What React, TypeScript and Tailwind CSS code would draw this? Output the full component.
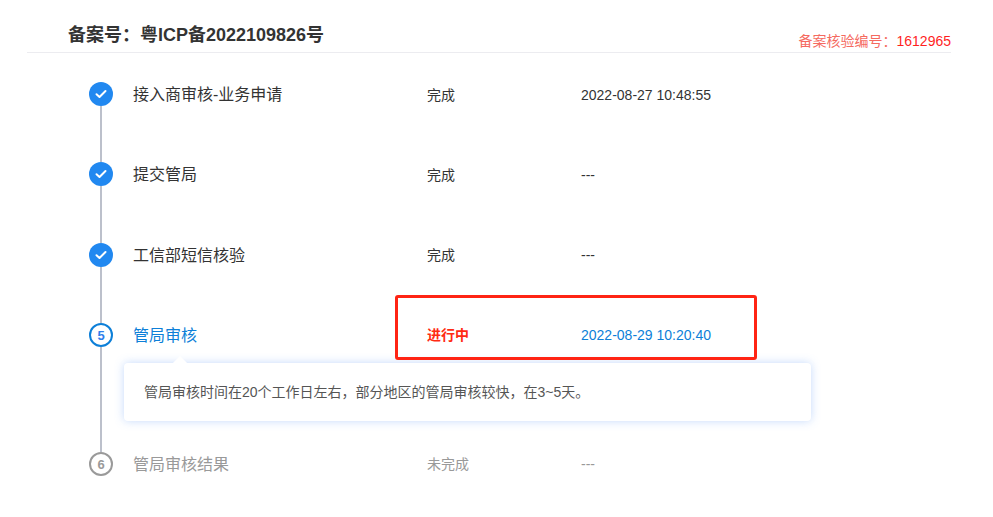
import { ReactNode } from "react";

type Step = {
  name: string;
  status: string;
  time: string;
  state: "done" | "active" | "todo";
  no?: number;
  rowClass: string;
  metaClass?: string;
};

const steps: Step[] = [
  { name: "接入商审核-业务申请", status: "完成", time: "2022-08-27 10:48:55", state: "done", rowClass: "h-[80px]" },
  { name: "提交管局", status: "完成", time: "---", state: "done", rowClass: "h-[81px]" },
  { name: "工信部短信核验", status: "完成", time: "---", state: "done", rowClass: "h-[80px]", metaClass: "mb-[2px]" },
  { name: "管局审核", status: "进行中", time: "2022-08-29 10:20:40", state: "active", no: 5, rowClass: "h-[129px]", metaClass: "mb-[2px]" },
  { name: "管局审核结果", status: "未完成", time: "---", state: "todo", no: 6, rowClass: "h-[24px]", metaClass: "mb-[2px]" },
];

function Dot({ step }: { step: Step }) {
  if (step.state === "done") {
    return (
      <span className="grid h-6 w-6 shrink-0 place-items-center rounded-full bg-[#2188f0]">
        <svg width="12" height="10" viewBox="0 0 12 10" fill="none">
          <path d="M1.5 5.2 L4.5 8 L10.5 2" stroke="#fff" strokeWidth="2" strokeLinecap="round" strokeLinejoin="round" />
        </svg>
      </span>
    );
  }
  return (
    <span
      className={
        step.state === "active"
          ? "grid h-6 w-6 shrink-0 place-items-center rounded-full border-2 border-[#0d7fd8] text-[13px] font-bold leading-none text-[#2f7fec]"
          : "grid h-6 w-6 shrink-0 place-items-center rounded-full border-2 border-[#9a9a9a] text-[13px] font-bold leading-none text-[#9a9a9a]"
      }
    >
      {step.no}
    </span>
  );
}

function Row({ step, last, children }: { step: Step; last: boolean; children?: ReactNode }) {
  const nameColor = step.state === "active" ? "text-[#0d7fd8]" : step.state === "todo" ? "text-[#999]" : "text-[#333]";
  const statusColor = step.state === "active" ? "font-bold text-[#ff2a12]" : step.state === "todo" ? "text-[#999]" : "text-[#333]";
  const timeColor = step.state === "active" ? "text-[#0d7fd8]" : step.state === "todo" ? "text-[#999]" : "text-[#333]";

  return (
    <li className={`relative flex ${step.rowClass}`}>
      <div className="flex w-6 shrink-0 flex-col items-center">
        <Dot step={step} />
        {!last && <span className="w-0.5 flex-1 bg-[#bcc0cb]" />}
      </div>
      <div className="min-w-0 flex-1">
        <div className="flex h-[26px] items-center pl-5 text-sm">
          <span className={`w-[294px] text-base ${nameColor}`}>{step.name}</span>
          <span className={`w-[154px] ${statusColor} ${step.metaClass ?? ""}`}>{step.status}</span>
          <span className={`${timeColor} ${step.metaClass ?? ""}`}>{step.time}</span>
        </div>
        {children}
      </div>
    </li>
  );
}

export default function App() {
  return (
    <div className="relative h-[517px] w-[993px] overflow-hidden bg-white font-['Liberation_Sans','Noto_Sans_CJK_SC',sans-serif]">
      <header className="ml-[27px] flex h-[53px] w-[924px] items-end justify-between border-b border-[#ececf0] pb-[1px] pl-[41px]">
        <h1 className="mb-[3px] text-lg font-bold leading-[26px] text-[#333]">备案号：粤ICP备2022109826号</h1>
        <p className="text-sm leading-5 text-[#f56a5f]">
          备案核验编号：<span className="text-[#ff1f1f]">1612965</span>
        </p>
      </header>

      <ul className="ml-[89px] mt-[29px] w-[730px]">
        {steps.map((step, i) => (
          <Row key={step.name} step={step} last={i === steps.length - 1}>
            {step.state === "active" && (
              <div className="relative ml-[11px] mt-[14px] w-[687px] rounded bg-white px-5 py-[19px] text-sm leading-5 text-[#555] shadow-[0_0_10px_rgba(90,150,245,0.35)]">
                <span className="absolute left-[51px] top-[-5px] h-2.5 w-2.5 rotate-45 bg-white" />
                <span className="relative">管局审核时间在20个工作日左右，部分地区的管局审核较快，在3~5天。</span>
              </div>
            )}
          </Row>
        ))}
      </ul>

      {/* 截图上的红框标注 */}
      <div className="absolute left-[395px] top-[295px] h-[65px] w-[362px] rounded-[3px] border-[3px] border-[#ff2414]" />
    </div>
  );
}
